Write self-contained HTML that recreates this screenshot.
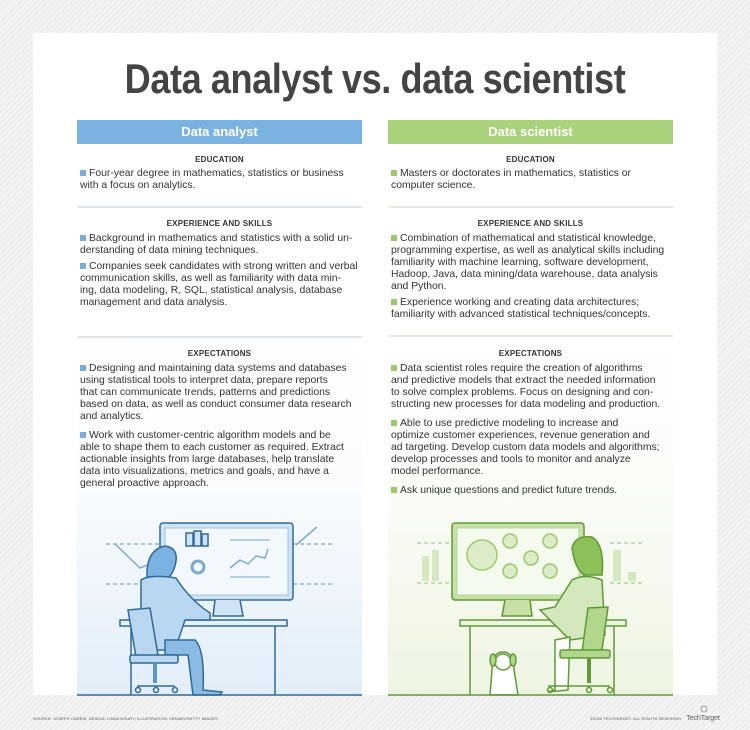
<!DOCTYPE html>
<html><head><meta charset="utf-8"><style>
*{margin:0;padding:0;box-sizing:border-box}
body{width:750px;height:730px;overflow:hidden;background:#eeeeee;font-family:"Liberation Sans",sans-serif;position:relative;
background-image:repeating-linear-gradient(135deg,#f4f4f4 0 3px,#e9e9e9 3px 4px)}
.card{position:absolute;left:33px;top:33px;width:684px;height:662px;background:#fff}
.title{position:absolute;left:0;top:55px;width:750px;text-align:center;font-weight:bold;font-size:42px;color:#444;letter-spacing:-0.5px;transform:scaleX(0.86)}
.bar{position:absolute;top:120px;width:285px;height:24px;color:#fff;font-weight:bold;font-size:13px;text-align:center;line-height:24px}
.h{position:absolute;width:285px;text-align:center;font-size:8px;font-weight:bold;color:#333;letter-spacing:0.2px;line-height:10px}
.l{position:absolute;font-size:10.4px;line-height:12px;color:#333;white-space:nowrap}
.sq{display:inline-block;width:6px;height:6px;margin-right:3px;vertical-align:0px}
.b .sq{background:#7aaed8}.g .sq{background:#9cc96a}
.div{position:absolute;height:2px;width:285px;background:#dfe5ea}
.foot{position:absolute;top:716px;font-size:4px;color:#555;letter-spacing:.1px}
</style></head><body>
<div class="card"></div>
<div style="position:absolute;left:77px;top:338px;width:285px;height:357px;background:linear-gradient(#fff,#fafcfe 40%,#e2eef9)"></div>
<div style="position:absolute;left:388px;top:338px;width:285px;height:357px;background:linear-gradient(#fff,#fbfcf8 40%,#eef5e2)"></div>
<div class="title">Data analyst vs. data scientist</div>
<div class="bar" style="left:77px;background:#7ab3e2">Data analyst</div>
<div class="bar" style="left:388px;background:#a9d27b">Data scientist</div>

<div class="div" style="left:77px;top:206px"></div><div class="div" style="left:77px;top:336px"></div>
<div class="div" style="left:388px;top:206px;background:#e5ebdf"></div><div class="div" style="left:388px;top:335px;background:#e5ebdf"></div>

<div class="h" style="left:77px;top:155px">EDUCATION</div>
<div class="h" style="left:77px;top:219px">EXPERIENCE AND SKILLS</div>
<div class="h" style="left:77px;top:349px">EXPECTATIONS</div>
<div class="h" style="left:388px;top:155px">EDUCATION</div>
<div class="h" style="left:388px;top:219px">EXPERIENCE AND SKILLS</div>
<div class="h" style="left:388px;top:349px">EXPECTATIONS</div>

<div class="b">
<div class="l" style="left:80px;top:168px"><span class="sq"></span>Four-year degree in mathematics, statistics or business<br>with a focus on analytics.</div>
<div class="l" style="left:80px;top:233px"><span class="sq"></span>Background in mathematics and statistics with a solid un-<br>derstanding of data mining techniques.</div>
<div class="l" style="left:80px;top:261px"><span class="sq"></span>Companies seek candidates with strong written and verbal<br>communication skills, as well as familiarity with data min-<br>ing, data modeling, R, SQL, statistical analysis, database<br>management and data analysis.</div>
<div class="l" style="left:80px;top:363px"><span class="sq"></span>Designing and maintaining data systems and databases<br>using statistical tools to interpret data, prepare reports<br>that can communicate trends, patterns and predictions<br>based on data, as well as conduct consumer data research<br>and analytics.</div>
<div class="l" style="left:80px;top:430px"><span class="sq"></span>Work with customer-centric algorithm models and be<br>able to shape them to each customer as required. Extract<br>actionable insights from large databases, help translate<br>data into visualizations, metrics and goals, and have a<br>general proactive approach.</div>
</div>
<div class="g">
<div class="l" style="left:391px;top:168px"><span class="sq"></span>Masters or doctorates in mathematics, statistics or<br>computer science.</div>
<div class="l" style="left:391px;top:233px"><span class="sq"></span>Combination of mathematical and statistical knowledge,<br>programming expertise, as well as analytical skills including<br>familiarity with machine learning, software development,<br>Hadoop, Java, data mining/data warehouse, data analysis<br>and Python.</div>
<div class="l" style="left:391px;top:297px"><span class="sq"></span>Experience working and creating data architectures;<br>familiarity with advanced statistical techniques/concepts.</div>
<div class="l" style="left:391px;top:363px"><span class="sq"></span>Data scientist roles require the creation of algorithms<br>and predictive models that extract the needed information<br>to solve complex problems. Focus on designing and con-<br>structing new processes for data modeling and production.</div>
<div class="l" style="left:391px;top:418px"><span class="sq"></span>Able to use predictive modeling to increase and<br>optimize customer experiences, revenue generation and<br>ad targeting. Develop custom data models and algorithms;<br>develop processes and tools to monitor and analyze<br>model performance.</div>
<div class="l" style="left:391px;top:485px"><span class="sq"></span>Ask unique questions and predict future trends.</div>
</div>

<svg style="position:absolute;left:0;top:0" width="750" height="730">
<g stroke="#2f6a99" stroke-width="1.5" fill="none">
<line x1="106" y1="544" x2="160" y2="544" stroke-dasharray="4 3" stroke="#8fb6d6"/>
<line x1="106" y1="584" x2="160" y2="584" stroke-dasharray="4 3" stroke="#8fb6d6"/>
<line x1="293" y1="544" x2="332" y2="544" stroke-dasharray="4 3" stroke="#8fb6d6"/>
<line x1="293" y1="584" x2="332" y2="584" stroke-dasharray="4 3" stroke="#8fb6d6"/>
<polyline points="115,544 140,568 160,560" stroke="#7fa9cc"/>
<line x1="296" y1="545" x2="317" y2="527" stroke="#7fa9cc"/>
<rect x="160" y="523" width="133" height="77" rx="3" fill="#cfe3f4"/>
<rect x="165" y="528" width="123" height="67" fill="#f3f8fd" stroke="#9fc3e0" stroke-width="1"/>
<rect x="186" y="533" width="7" height="13" fill="#cfe3f4"/><rect x="194" y="531" width="7" height="15" fill="#cfe3f4"/><rect x="202" y="534" width="6" height="12" fill="#cfe3f4"/>
<circle cx="198" cy="567" r="6" stroke="#7fa9cc" stroke-width="3"/>
<polyline points="230,568 240,560 248,564 256,556 265,558 268,549" stroke="#7fa9cc"/>
<line x1="230" y1="540" x2="270" y2="540" stroke="#9fc3e0"/><line x1="230" y1="577" x2="270" y2="577" stroke="#9fc3e0"/>
<path d="M215 600 L213 616 L243 616 L240 600" fill="#cfe3f4"/>
<rect x="120" y="620" width="167" height="6" fill="#e8f1f9"/>
<line x1="131" y1="626" x2="131" y2="695"/><line x1="275" y1="626" x2="275" y2="695"/>
<path d="M147 577 Q146 550 165 546 Q180 548 175 566 Q172 575 168 578 Z" fill="#7ab3e2"/>
<path d="M141 580 Q150 574 176 578 Q190 600 210 613 L210 620 L185 620 L175 650 L141 650 Z" fill="#b9d7f0"/>
<path d="M165 640 L195 640 Q205 650 203 690 L222 692 L220 695 L193 695 L188 655 L165 655 Z" fill="#8bbbe2"/>
<path d="M128 610 L150 608 L158 655 L136 657 Z" fill="#b9d7f0"/>
<rect x="130" y="655" width="48" height="8" rx="2" fill="#b9d7f0"/>
<line x1="155" y1="663" x2="155" y2="683" stroke-width="4" stroke="#5c96c6"/>
<line x1="137" y1="686" x2="175" y2="686"/>
<circle cx="138" cy="690" r="2.5"/><circle cx="156" cy="690" r="2.5"/><circle cx="175" cy="690" r="2.5"/>
<line x1="77" y1="695" x2="362" y2="695" stroke-width="1.5"/>
</g>
<g stroke="#5f9a35" stroke-width="1.5" fill="none">
<line x1="417" y1="543" x2="452" y2="543" stroke-dasharray="4 3" stroke="#b7d49c"/>
<line x1="417" y1="583" x2="452" y2="583" stroke-dasharray="4 3" stroke="#b7d49c"/>
<line x1="610" y1="543" x2="643" y2="543" stroke-dasharray="4 3" stroke="#b7d49c"/>
<line x1="610" y1="583" x2="643" y2="583" stroke-dasharray="4 3" stroke="#b7d49c"/>
<rect x="422" y="556" width="7" height="25" fill="#d6e8c2" stroke="none"/><rect x="432" y="550" width="7" height="31" fill="#d6e8c2" stroke="none"/>
<rect x="613" y="550" width="8" height="31" fill="#d6e8c2" stroke="none"/><rect x="628" y="572" width="8" height="9" fill="#d6e8c2" stroke="none"/>
<rect x="452" y="523" width="132" height="77" rx="3" fill="#c6e0a6"/>
<rect x="457" y="528" width="122" height="67" fill="#f5faef" stroke="#b7d49c" stroke-width="1"/>
<circle cx="482" cy="555" r="15" fill="#dcecc8" stroke="#9cc96a"/>
<g fill="#dcecc8" stroke="#9cc96a"><circle cx="510" cy="541" r="7"/><circle cx="510" cy="571" r="7"/><circle cx="531" cy="558" r="7"/><circle cx="550" cy="541" r="7"/><circle cx="550" cy="571" r="7"/></g>
<path d="M505 600 L502 616 L532 616 L530 600" fill="#c6e0a6"/>
<rect x="460" y="620" width="166" height="6" fill="#eef5e4"/>
<line x1="470" y1="626" x2="470" y2="695"/><line x1="614" y1="626" x2="614" y2="695"/>
<path d="M572 548 Q575 535 592 537 Q605 545 602 575 L585 575 Q575 570 572 548 Z" fill="#8cc15a"/>
<path d="M572 580 Q585 573 602 580 L605 635 L570 640 L555 625 L540 610 L555 607 Z" fill="#d3e8bc"/>
<path d="M555 640 L570 637 L568 690 L548 692 L555 690 Z" fill="#fff"/>
<path d="M588 608 L608 607 L602 650 L582 652 Z" fill="#b2d78c"/>
<rect x="560" y="650" width="50" height="8" rx="2" fill="#b2d78c"/>
<line x1="589" y1="658" x2="589" y2="683" stroke-width="4"/>
<line x1="548" y1="686" x2="610" y2="686"/>
<circle cx="550" cy="690" r="2.5"/><circle cx="589" cy="690" r="2.5"/><circle cx="610" cy="690" r="2.5"/>
<path d="M492 670 Q492 652 503 652 Q514 652 514 670 L518 695 L490 695 Z" fill="#fff"/>
<circle cx="503" cy="662" r="8" fill="#fff"/>
<ellipse cx="493" cy="660" rx="3" ry="6" fill="#b2d78c"/><ellipse cx="513" cy="660" rx="3" ry="6" fill="#b2d78c"/>
<line x1="388" y1="695" x2="673" y2="695"/>
</g>
<circle cx="704" cy="709" r="3" fill="none" stroke="#888" stroke-width="0.8"/>
</svg>
<div class="foot" style="left:33px">SOURCE: JOSEPH CAREW; DESIGN: LINDA KOURY; ILLUSTRATION: VENIMO/GETTY IMAGES</div>
<div class="foot" style="left:590px">©2020 TECHTARGET. ALL RIGHTS RESERVED</div>
<div style="position:absolute;left:686px;top:713px;font-size:7.5px;color:#666;letter-spacing:-0.3px">TechTarget</div>
</body></html>
